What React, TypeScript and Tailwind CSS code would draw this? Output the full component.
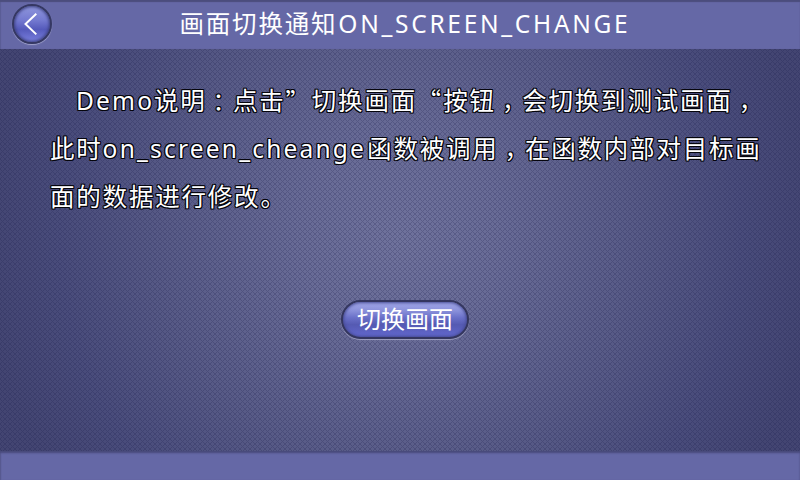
import React from 'react';

const fontClass = "font-['Noto_Sans','Noto_Sans_CJK_SC',sans-serif]";
const cjk = "font-['Noto_Sans_CJK_SC',sans-serif] text-[24.5px] tracking-[1.8px]";
const outline =
  '[text-shadow:1px_0_#05050c,-1px_0_#05050c,0_1px_#05050c,0_-1px_#05050c,1px_1px_#05050c,-1px_1px_#05050c,1px_-1px_#05050c,-1px_-1px_#05050c]';

function Han({ children }: { children: string }) {
  return <span className={cjk}>{children}</span>;
}

function Mark({ children, pad = '' }: { children: string; pad?: string }) {
  return <span className={`inline-block w-[26.3px] shrink-0 font-['Noto_Sans_CJK_SC',sans-serif] text-[24px] ${pad}`}>{children}</span>;
}

function Texture() {
  return (
    <svg className="absolute inset-0 h-full w-full" aria-hidden="true" shapeRendering="crispEdges">
      <defs>
        <pattern id="weave" width="5" height="5" patternUnits="userSpaceOnUse">
          <g fill="#1a1c48" fillOpacity=".23">
            {[0, 1, 2, 3, 4].map((i) => (
              <React.Fragment key={i}>
                <rect x={i} y={i} width="1" height="1" />
                {i !== 2 && <rect x={4 - i} y={i} width="1" height="1" />}
              </React.Fragment>
            ))}
          </g>
        </pattern>
      </defs>
      <rect width="100%" height="100%" fill="url(#weave)" />
    </svg>
  );
}

export default function App() {
  return (
    <div className={`flex h-[480px] w-[800px] flex-col overflow-hidden text-white ${fontClass}`}>
      <header className="flex h-[49px] shrink-0 items-start bg-[#6568a6] pl-[12px] shadow-[inset_0_2px_1px_#4b4d7d,inset_1px_0_1px_#5d6098]">
        <button
          aria-label="返回"
          className="mt-[4px] flex h-[40px] w-[40px] items-center justify-center rounded-full border-[2px] border-[#353863] bg-[linear-gradient(#8f96dc,#7379d0_40%,#555abb_65%,#7b81e0)] shadow-[inset_0_0_3px_1px_#3c4081,0_1px_1px_#a3a5cc]"
        >
          <svg width="36" height="36" viewBox="0 0 36 36" fill="none">
            <path d="M22.3 7.8 11.5 18l10.8 10.4" stroke="white" strokeWidth="2" />
          </svg>
        </button>
        <h1 className="ml-[127.5px] flex items-baseline whitespace-nowrap leading-[45px]">
          <Han>画面切换通知</Han>
          <span className="ml-px text-[24.5px] tracking-[2.7px]">ON_SCREEN_CHANGE</span>
        </h1>
      </header>
      <main className="relative flex h-[402px] shrink-0 flex-col items-center bg-[radial-gradient(circle_at_400px_190px,#6f729c_0,#686b96_100px,#585b87_230px,#494c7b_340px,#434572_420px,#434572_100%)]">
        <Texture />
        <div className={`relative flex w-[700px] flex-col pt-[27px] leading-[48px] ${outline}`}>
          <p className="flex h-[48px] items-baseline whitespace-nowrap pl-[26px]">
            <span className="w-[78px] shrink-0 text-[24.5px] tracking-[2.2px]">Demo</span>
            <Han>说明</Han>
            <Mark pad="pl-[6px] tracking-[-6px]">：</Mark>
            <Han>点击</Han>
            <Mark>”</Mark>
            <Han>切换画面</Han>
            <Mark>“</Mark>
            <Han>按钮</Han>
            <Mark pad="pl-[6px] tracking-[-5px]">，</Mark>
            <Han>会切换到测试画面</Han>
            <Mark pad="pl-[6px] tracking-[-5px]">，</Mark>
          </p>
          <p className="flex h-[48px] items-baseline whitespace-nowrap">
            <Han>此时</Han>
            <span className="w-[264.5px] shrink-0 text-[24.5px] tracking-[2.2px]">on_screen_cheange</span>
            <Han>函数被调用</Han>
            <Mark pad="pl-[6px] tracking-[-5px]">，</Mark>
            <Han>在函数内部对目标画</Han>
          </p>
          <p className="flex h-[48px] items-baseline whitespace-nowrap">
            <Han>面的数据进行修改。</Han>
          </p>
        </div>
        <button className="relative ml-[10px] mt-[80px] flex h-[39px] w-[128px] items-start justify-center rounded-full border-[2px] border-[#34365f] bg-[linear-gradient(#a2a8e8_0,#8a90da_25%,#6a70c8_45%,#555ab2_65%,#6368cf_100%)] font-['Noto_Sans_CJK_SC',sans-serif] text-[24px] leading-[32px] shadow-[inset_0_0_3px_1px_#454a92,0_1px_1px_#a0a2c0]">
          切换画面
        </button>
      </main>
      <footer className="h-[29px] shrink-0 bg-[#6568a6] shadow-[inset_0_2px_2px_#484a7b,inset_1px_0_1px_#5d6098]" />
    </div>
  );
}
